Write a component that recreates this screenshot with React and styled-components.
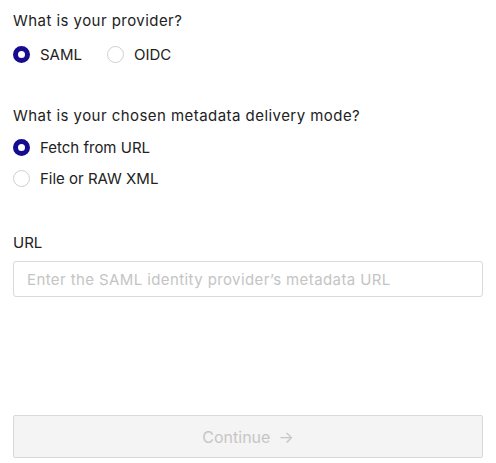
import React from "react";
import styled, { createGlobalStyle } from "styled-components";

const GlobalStyle = createGlobalStyle`
  body {
    margin: 0;
    background: #ffffff;
    font-family: Inter, "Liberation Sans", sans-serif;
    color: #1f1f1f;
  }
`;

const Page = styled.div`
  width: 470px;
  padding: 10px 13px 0;
  display: flex;
  flex-direction: column;
`;

const Question = styled.div`
  font-size: 15px;
  line-height: 22px;
  letter-spacing: 0.45px;
  color: #222;
  margin-top: ${(p) => p.$top || 0}px;
`;

const Group = styled.div`
  display: flex;
  flex-direction: ${(p) => (p.$row ? "row" : "column")};
  gap: ${(p) => (p.$row ? "25px" : "14px")};
  margin-top: ${(p) => p.$top}px;
`;

const Option = styled.label`
  display: flex;
  align-items: center;
  gap: 10px;
  font-size: 15px;
  line-height: 17px;
  color: #222;
  cursor: pointer;
`;

const Dot = styled.span`
  width: 17px;
  height: 17px;
  box-sizing: border-box;
  border-radius: 50%;
  border: ${(p) => (p.$checked ? "5px solid #150c8f" : "1px solid #cfcfcf")};
  background: #fff;
  flex-shrink: 0;
`;

const Label = styled.div`
  font-size: 15px;
  line-height: 20px;
  color: #222;
  margin-top: 46px;
`;

const Input = styled.input`
  margin-top: 8px;
  height: 36px;
  box-sizing: border-box;
  border: 1px solid #dadada;
  border-radius: 3px;
  padding: 0 13px;
  font-family: inherit;
  font-size: 15px;
  letter-spacing: 0.4px;
  color: #222;
  outline: none;

  &::placeholder {
    color: #c4c4c4;
  }
`;

const Button = styled.button`
  margin-top: 118px;
  height: 43px;
  box-sizing: border-box;
  border: 1px solid #d9d9d9;
  border-radius: 2px;
  background: #f4f4f4;
  color: #c6c6c6;
  font-family: inherit;
  font-size: 16px;
  display: flex;
  align-items: center;
  justify-content: center;
  gap: 8px;
`;

const Radio = ({ checked, children }) => (
  <Option>
    <Dot $checked={checked} />
    {children}
  </Option>
);

export default function App() {
  return (
    <>
      <GlobalStyle />
      <Page>
        <Question>What is your provider?</Question>
        <Group $row $top={14}>
          <Radio checked>SAML</Radio>
          <Radio>OIDC</Radio>
        </Group>
        <Question $top={42}>What is your chosen metadata delivery mode?</Question>
        <Group $top={12}>
          <Radio checked>Fetch from URL</Radio>
          <Radio>File or RAW XML</Radio>
        </Group>
        <Label>URL</Label>
        <Input placeholder="Enter the SAML identity provider’s metadata URL" />
        <Button disabled>
          Continue <span>→</span>
        </Button>
      </Page>
    </>
  );
}
